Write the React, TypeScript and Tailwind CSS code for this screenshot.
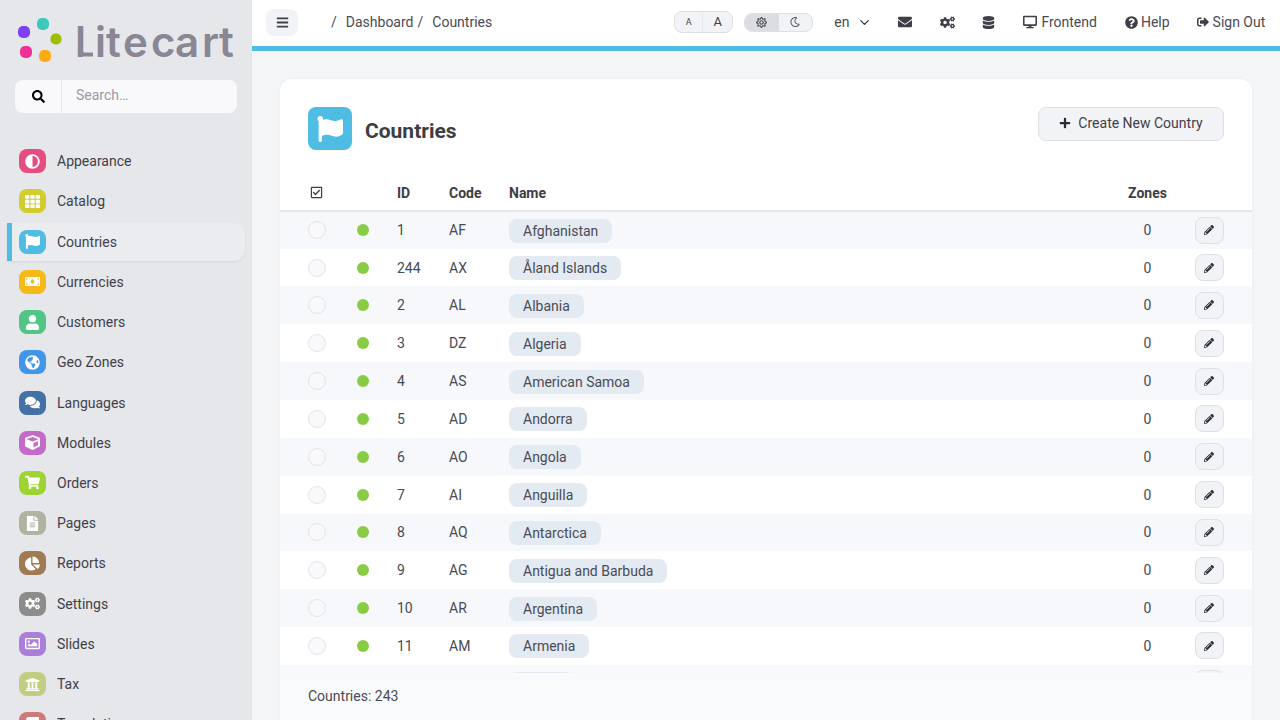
import type { ComponentType } from 'react';
import {
  FaAdjust, FaBars, FaBook, FaChartPie, FaCogs, FaComments, FaCube, FaDatabase, FaDesktop, FaEnvelope,
  FaFileAlt, FaFlag, FaGlobeAmericas, FaMoneyBill, FaPencilAlt, FaPlus, FaQuestionCircle, FaRegCheckSquare,
  FaRegImage, FaRegMoon, FaRegSun, FaSearch, FaShoppingCart, FaSignOutAlt, FaTh, FaUniversity, FaUser,
} from 'react-icons/fa';
import { ChevronDown } from 'lucide-react';

interface NavItem {
  label: string;
  icon: ComponentType<{ className?: string }>;
  color: string;
  active?: boolean;
}

const navItems: NavItem[] = [
  { label: 'Appearance', icon: FaAdjust, color: 'bg-[#e64c80]' },
  { label: 'Catalog', icon: FaTh, color: 'bg-[#d2cc2d]' },
  { label: 'Countries', icon: FaFlag, color: 'bg-[#4fbce4]', active: true },
  { label: 'Currencies', icon: FaMoneyBill, color: 'bg-[#f6b91a]' },
  { label: 'Customers', icon: FaUser, color: 'bg-[#50c586]' },
  { label: 'Geo Zones', icon: FaGlobeAmericas, color: 'bg-[#4296ea]' },
  { label: 'Languages', icon: FaComments, color: 'bg-[#4370a5]' },
  { label: 'Modules', icon: FaCube, color: 'bg-[#c66ac9]' },
  { label: 'Orders', icon: FaShoppingCart, color: 'bg-[#9dd432]' },
  { label: 'Pages', icon: FaFileAlt, color: 'bg-[#afb3a0]' },
  { label: 'Reports', icon: FaChartPie, color: 'bg-[#9f7a52]' },
  { label: 'Settings', icon: FaCogs, color: 'bg-[#8c8c8c]' },
  { label: 'Slides', icon: FaRegImage, color: 'bg-[#ab7fd9]' },
  { label: 'Tax', icon: FaUniversity, color: 'bg-[#c2cd82]' },
  { label: 'Translations', icon: FaBook, color: 'bg-[#cc7a7a]' },
];

const countries = [
  [1, 'AF', 'Afghanistan'],
  [244, 'AX', 'Åland Islands'],
  [2, 'AL', 'Albania'],
  [3, 'DZ', 'Algeria'],
  [4, 'AS', 'American Samoa'],
  [5, 'AD', 'Andorra'],
  [6, 'AO', 'Angola'],
  [7, 'AI', 'Anguilla'],
  [8, 'AQ', 'Antarctica'],
  [9, 'AG', 'Antigua and Barbuda'],
  [10, 'AR', 'Argentina'],
  [11, 'AM', 'Armenia'],
  [12, 'AW', 'Aruba'],
];

function Logo() {
  return (
    <svg width="222" height="50" viewBox="0 0 222 50" className="block">
      <rect x="1" y="9" width="12" height="12" rx="5" fill="#7f40f5" />
      <rect x="20" y="1" width="12" height="12" rx="5" fill="#3cc8bb" />
      <rect x="33.5" y="16.5" width="11" height="11" rx="5" fill="#99bf00" />
      <rect x="3" y="29" width="12" height="12" rx="5" fill="#f02f96" />
      <rect x="22" y="33" width="12" height="12" rx="5" fill="#fdab12" />
      <text
        x="58 78 89 106 134 158 185 202"
        y="39.5"
        fontFamily="Inter, sans-serif"
        fontWeight="600"
        fontSize="42"
        fill="#8a8694"
      >
        litecart
      </text>
      <path d="M63 32 q0 5.5 5 5.5 h8" fill="none" stroke="#8a8694" strokeWidth="4" />
    </svg>
  );
}

function Sidebar() {
  return (
    <aside className="w-[252px] shrink-0 h-full overflow-hidden bg-[#e6e7eb] shadow-[inset_-1px_0_0_#e2e3e7]">
      <div className="pl-[17px] pt-[17px]">
        <Logo />
      </div>
      <div className="ml-[15px] mt-[13px] w-[222px] h-[33px] flex rounded-lg bg-[#f9f9fb] overflow-hidden">
        <div className="w-[47px] flex items-center justify-center border-r border-[#e6e7eb]">
          <FaSearch className="w-[13px] h-[13px] text-black" />
        </div>
        <input
          placeholder="Search…"
          className="flex-1 min-w-0 pl-[14px] pb-[3px] bg-transparent text-sm text-[#3f3f4a] placeholder:text-[#9a9aa5] outline-none"
        />
      </div>
      <nav className="mt-[28.08px] ml-[7px] w-[238px]">
        {navItems.map((item) => (
          <div key={item.label} className="h-[40.22px] flex items-center">
            <a
              className={`w-full h-[38px] flex items-center gap-[11px] pl-[7px] border-l-[5px] rounded-r-xl text-sm text-[#3f3f4a] ${
                item.active
                  ? 'border-[#4fbce4] bg-[#ebecf0] shadow-[0_2px_2px_#dcdde2]'
                  : 'border-transparent'
              }`}
            >
              <span className={`w-[27px] h-[24px] rounded-lg flex items-center justify-center shrink-0 ${item.color}`}>
                <item.icon className="w-[15px] h-[15px] text-white" />
              </span>
              {item.label}
            </a>
          </div>
        ))}
      </nav>
    </aside>
  );
}

function Topbar() {
  return (
    <header className="h-[51px] shrink-0 pb-[2px] bg-white border-b-[5px] border-[#4fbce4] flex items-center text-sm text-[#4a4a55]">
      <button className="ml-[14px] mt-[1px] w-[32px] h-[27px] rounded-lg bg-[#f2f3f6] flex items-center justify-center text-[#3f3f4a]">
        <FaBars className="w-[13px] h-[13px]" />
      </button>
      <div className="ml-[33px] flex items-center">
        <span>/</span>
        <span className="ml-[9px]">Dashboard</span>
        <span className="ml-[4px]">/</span>
        <span className="ml-[9px]">Countries</span>
      </div>
      <div className="ml-[182px] w-[59px] h-[22px] flex rounded-lg border border-[#dfe0e4] bg-[#f2f3f6] text-[#3f3f4a]">
        <span className="w-[27px] flex items-center justify-center text-[9px]">A</span>
        <span className="flex-1 flex items-center justify-center border-l border-[#e9eaee] text-[13px]">A</span>
      </div>
      <div className="ml-[11px] w-[69px] h-[19px] flex rounded-lg border border-[#dfe0e4] bg-[#f2f3f6] overflow-hidden text-[#3f3f4a]">
        <span className="w-[34px] pr-[1px] flex items-center justify-center bg-[#dcdde0]">
          <FaRegSun className="w-[11px] h-[11px]" />
        </span>
        <span className="flex-1 pr-[1px] flex items-center justify-center">
          <FaRegMoon className="w-[10px] h-[10px] text-[#5a5a65]" />
        </span>
      </div>
      <span className="ml-[21px]">en</span>
      <ChevronDown strokeWidth={2.25} className="ml-[8px] w-[15px] h-[15px] text-[#3f3f4a]" />
      <FaEnvelope className="ml-[26px] w-[14px] h-[14px] text-[#3f3f4a]" />
      <FaCogs className="ml-[28px] w-[15px] h-[15px] text-[#3f3f4a]" />
      <FaDatabase className="ml-[27px] w-[13px] h-[13px] text-[#3f3f4a]" />
      <FaDesktop className="ml-[28px] w-[14px] h-[14px] text-[#3f3f4a]" />
      <span className="ml-[4px]">Frontend</span>
      <FaQuestionCircle className="ml-[28px] w-[13px] h-[13px] text-[#3f3f4a]" />
      <span className="ml-[3px]">Help</span>
      <FaSignOutAlt className="ml-[27px] w-[12px] h-[12px] text-[#3f3f4a]" />
      <span className="ml-[4px]">Sign Out</span>
    </header>
  );
}

function CountryTable() {
  return (
    <table className="w-[972px] table-fixed border-collapse text-sm text-[#4a4a55]">
      <colgroup>
        <col className="w-[77px]" />
        <col className="w-[40px]" />
        <col className="w-[52px]" />
        <col className="w-[60px]" />
        <col />
        <col className="w-[95px]" />
        <col className="w-[57px]" />
      </colgroup>
      <thead>
        <tr className="h-[30.75px] border-b-2 border-[#e6e7eb] text-[#3d3d42] font-bold text-left">
          <th className="pl-[30px] pb-[5px]">
            <FaRegCheckSquare className="w-[13px] h-[13px]" />
          </th>
          <th />
          <th className="pb-[3px]">ID</th>
          <th className="pb-[3px]">Code</th>
          <th className="pb-[3px]">Name</th>
          <th className="pb-[3px] text-center">Zones</th>
          <th />
        </tr>
      </thead>
      <tbody>
        {countries.map(([id, code, name]) => (
          <tr key={id} className="h-[37.857px] even:bg-white odd:bg-[#f7f8fb]">
            <td className="pl-[28px]">
              <span className="block w-[18px] h-[18px] rounded-full border border-[#e3e4ea] bg-[#f9f9fb]" />
            </td>
            <td>
              <span className="block w-[12px] h-[12px] rounded-full bg-[#88cc44]" />
            </td>
            <td>{id}</td>
            <td>{code}</td>
            <td>
              <span className="mt-[1px] inline-flex items-center h-[24px] px-[14px] rounded-lg bg-[#e3eaf2]">{name}</span>
            </td>
            <td className="text-center">0</td>
            <td>
              <button className="w-[29px] h-[27px] pr-[2px] rounded-lg border border-[#dfe0e4] bg-[#f2f3f6] flex items-center justify-center">
                <FaPencilAlt className="w-[10px] h-[10px] text-[#2b2b33]" />
              </button>
            </td>
          </tr>
        ))}
      </tbody>
    </table>
  );
}

export default function App() {
  return (
    <div className="h-screen flex overflow-hidden bg-[#f4f5f7] font-['Roboto',sans-serif]">
      <Sidebar />
      <div className="flex-1 min-w-0 flex flex-col">
        <Topbar />
        <main className="flex-1 min-h-0 flex flex-col px-[28px] pt-[28px]">
          <section className="flex-1 min-h-0 flex flex-col bg-white rounded-t-xl shadow-[0_0_2px_#e6e7eb]">
            <div className="shrink-0 flex items-start justify-between px-[28px] pt-[28px] h-[101px]">
              <div className="flex items-center gap-[13px]">
                <span className="w-[44px] h-[43px] rounded-lg bg-[#4fbce4] flex items-center justify-center">
                  <FaFlag className="w-[26px] h-[26px] text-white" />
                </span>
                <h1 className="mt-[7px] text-[21px] font-bold text-[#3d3d42]">Countries</h1>
              </div>
              <button className="w-[186px] h-[34px] pb-[2px] rounded-lg border border-[#dfe0e4] bg-[#f2f3f6] flex items-center justify-center gap-[7px] text-sm text-[#3f3f4a]">
                <FaPlus className="w-[12px] h-[12px] text-[#2b2b33]" />
                Create New Country
              </button>
            </div>
            <div className="flex-1 min-h-0 overflow-hidden">
              <CountryTable />
            </div>
            <div className="shrink-0 h-[47px] px-[28px] pb-[2px] flex items-center bg-[#f9fafc] text-sm text-[#4a4a55]">
              Countries: 243
            </div>
          </section>
        </main>
      </div>
    </div>
  );
}
